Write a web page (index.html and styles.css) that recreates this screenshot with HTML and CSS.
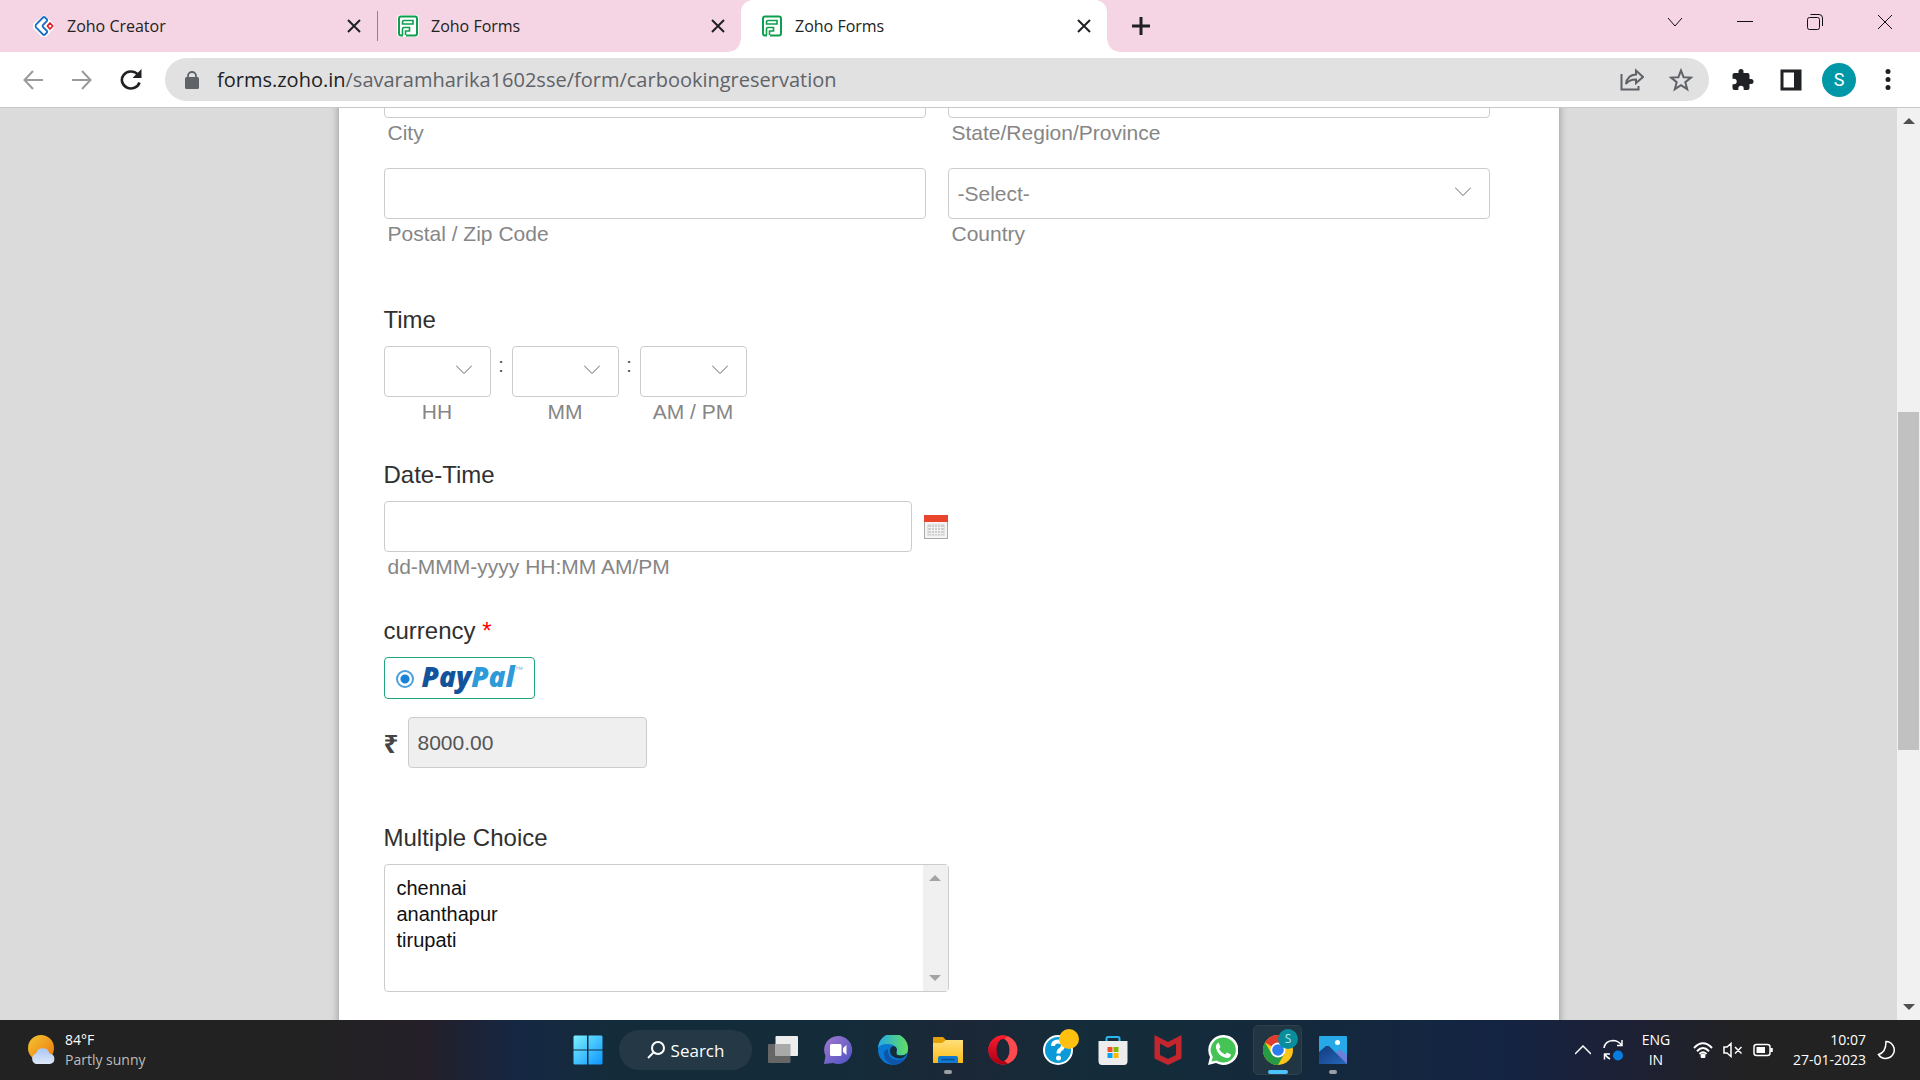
FILE: index.html
```html
<!DOCTYPE html>
<html lang="en">
<head>
<meta charset="utf-8">
<title>Zoho Forms</title>
<link rel="stylesheet" href="styles.css">
</head>
<body>
<div class="screen">
  <header class="tabstrip">
    <div class="tab">
      <svg class="favicon" viewBox="0 0 22 22"><path d="M11 0 21 9v4L13 22H9L0 13V9z" fill="#fff"/><path d="M10 2.500 3 9.500Q2 11 3 12.500L10 19.500Q11 20.500 12 19.500L14 17.500Q14.500 16.500 14 16L10 12Q9 11 10 10L14 6Q14.500 5 14 4.500L12 2.500Q11 1.500 10 2.500z" fill="none" stroke="#1b6fc0" stroke-width="1.800"/><path d="M17 8 19.800 11 17 14 14.400 11z" fill="#fff" stroke="#e2202c" stroke-width="1.800" stroke-linejoin="round"/></svg>
      <span class="tab-title">Zoho Creator</span>
      <button class="tab-close" aria-label="Close tab"><svg viewBox="0 0 14 14"><path d="M1 1 13 13M13 1 1 13"/></svg></button>
    </div>
    <div class="tab divided">
      <svg class="favicon" viewBox="0 0 22 22"><rect width="22" height="22" rx="3" fill="#fff"/><path d="M4 1.500H18Q20 1.500 20 3.500V18.500Q20 20.500 18 20.500H9M6 20.500H4Q2 20.500 2 18.500V3.500Q2 1.500 4 1.500" fill="none" stroke="#0e9f4f" stroke-width="2"/><path d="M7 5.500H16V9H5.500V7Q5.500 5.500 7 5.500zM5.500 20V14Q5.500 12.500 7 12.500H12.500V16H8.500V20" fill="none" stroke="#0e9f4f" stroke-width="1.600"/></svg>
      <span class="tab-title">Zoho Forms</span>
      <button class="tab-close" aria-label="Close tab"><svg viewBox="0 0 14 14"><path d="M1 1 13 13M13 1 1 13"/></svg></button>
    </div>
    <div class="tab active">
      <svg class="favicon" viewBox="0 0 22 22"><path d="M4 1.500H18Q20 1.500 20 3.500V18.500Q20 20.500 18 20.500H9M6 20.500H4Q2 20.500 2 18.500V3.500Q2 1.500 4 1.500" fill="none" stroke="#0e9f4f" stroke-width="2"/><path d="M7 5.500H16V9H5.500V7Q5.500 5.500 7 5.500zM5.500 20V14Q5.500 12.500 7 12.500H12.500V16H8.500V20" fill="none" stroke="#0e9f4f" stroke-width="1.600"/></svg>
      <span class="tab-title">Zoho Forms</span>
      <button class="tab-close" aria-label="Close tab"><svg viewBox="0 0 14 14"><path d="M1 1 13 13M13 1 1 13"/></svg></button>
    </div>
    <button class="new-tab" aria-label="New tab"><svg viewBox="0 0 20 20"><path d="M10 1V19M1 10H19"/></svg></button>
    <div class="window-controls">
      <button aria-label="Search tabs"><svg viewBox="0 0 16 16"><path d="M1 4 8 12 15 4"/></svg></button>
      <button aria-label="Minimize"><svg viewBox="0 0 16 16"><path d="M0 7.500H16"/></svg></button>
      <button aria-label="Restore"><svg viewBox="0 0 16 16"><rect x=".5" y="3.500" width="12" height="12" rx="2"/><path d="M3.500 .5H12Q15.500 .5 15.500 4V12"/></svg></button>
      <button aria-label="Close"><svg viewBox="0 0 16 16"><path d="M1 1 15 15M15 1 1 15"/></svg></button>
    </div>
  </header>

  <nav class="toolbar">
    <button class="nav-btn faded" aria-label="Back"><svg viewBox="0 0 20 20"><path d="M20 10H1.500M10 1 1.500 10 10 19"/></svg></button>
    <button class="nav-btn faded" aria-label="Forward"><svg viewBox="0 0 20 20"><path d="M0 10H18.500M10 1 18.500 10 10 19"/></svg></button>
    <button class="nav-btn" aria-label="Reload"><svg class="reload" viewBox="0 0 22 22"><path d="M17.500 5.200A9 8.500 0 1 0 19.500 13.500" fill="none" stroke="#202124" stroke-width="2.600"/><path d="M21.500 0V9H12.500z" fill="#202124"/></svg></button>
    <div class="omnibox">
      <svg class="lock" viewBox="0 0 14 18"><rect y="6" width="14" height="12" rx="1.500" fill="#5f6368"/><path d="M3 7V5a4 4 0 0 1 8 0V7" fill="none" stroke="#5f6368" stroke-width="1.800"/></svg>
      <a class="url" href="#">forms.zoho.in<span class="path">/savaramharika1602sse/form/carbookingreservation</span></a>
      <button class="box-btn" aria-label="Share"><svg viewBox="0 0 24 22"><path d="M1.500 5V20.500H18.500V17M6 15Q7 6 16 5.500V1.500L23 8 16 14V10.500Q9 10.500 6 15z"/></svg></button>
      <button class="box-btn" aria-label="Bookmark"><svg viewBox="0 0 24 24"><path d="M12 2.500 14.600 9.200 22 9.600 16.300 14.200 18.200 21.200 12 17.200 5.800 21.200 7.700 14.200 2 9.600 9.400 9.200z"/></svg></button>
    </div>
    <button class="tool-btn" aria-label="Extensions"><svg viewBox="0 0 24 24"><path d="M21 11h-1.500V7a2 2 0 0 0-2-2h-4V3.500a2.500 2.500 0 0 0-5 0V5h-4a2 2 0 0 0-2 2v3.800H4a2.700 2.700 0 0 1 0 5.400H2.500V20a2 2 0 0 0 2 2h3.800v-1.500a2.700 2.700 0 0 1 5.400 0V22h3.800a2 2 0 0 0 2-2v-4H21a2.500 2.500 0 0 0 0-5z" fill="#202124"/></svg></button>
    <button class="tool-btn" aria-label="Side panel"><svg viewBox="0 0 24 24"><path d="M1.500 1.500H22.500V22.500H1.500zM4.500 4.500V19.500H15V4.500z" fill="#202124" fill-rule="evenodd"/></svg></button>
    <button class="tool-btn avatar" aria-label="Profile">S</button>
    <button class="tool-btn" aria-label="Menu"><svg viewBox="0 0 24 24"><g fill="#202124"><circle cx="12" cy="3.500" r="2.500"/><circle cx="12" cy="11.500" r="2.500"/><circle cx="12" cy="19.500" r="2.500"/></g></svg></button>
  </nav>

  <div class="viewport">
    <main class="canvas">
      <form class="sheet">
        <div class="address">
          <div class="field">
            <input class="box" id="city" type="text">
            <label class="hint" for="city">City</label>
          </div>
          <div class="field">
            <input class="box" id="state" type="text">
            <label class="hint" for="state">State/Region/Province</label>
          </div>
          <div class="field">
            <input class="box" id="zip" type="text">
            <label class="hint" for="zip">Postal / Zip Code</label>
          </div>
          <div class="field">
            <div class="picker">
              <select class="box" id="country"><option>-Select-</option></select>
              <svg class="chevron" viewBox="0 0 16 10"><path d="M0 .5 8 8.500 16 .5"/></svg>
            </div>
            <label class="hint" for="country">Country</label>
          </div>
        </div>

        <section class="group">
          <h2 class="title">Time</h2>
          <div class="time">
            <div class="part">
              <div class="picker"><select class="box" id="hh"><option></option></select><svg class="chevron" viewBox="0 0 16 10"><path d="M0 .5 8 8.500 16 .5"/></svg></div>
              <label class="hint" for="hh">HH</label>
            </div>
            <span class="colon">:</span>
            <div class="part">
              <div class="picker"><select class="box" id="mm"><option></option></select><svg class="chevron" viewBox="0 0 16 10"><path d="M0 .5 8 8.500 16 .5"/></svg></div>
              <label class="hint" for="mm">MM</label>
            </div>
            <span class="colon">:</span>
            <div class="part">
              <div class="picker"><select class="box" id="ampm"><option></option></select><svg class="chevron" viewBox="0 0 16 10"><path d="M0 .5 8 8.500 16 .5"/></svg></div>
              <label class="hint" for="ampm">AM / PM</label>
            </div>
          </div>
        </section>

        <section class="group">
          <h2 class="title">Date-Time</h2>
          <div class="date">
            <input class="box" id="date" type="text">
            <button type="button" class="calendar" aria-label="Pick a date"><svg viewBox="0 0 24 24"><rect x=".5" y="1" width="23" height="22.500" fill="#f4f4f4" stroke="#a9a9a9"/><path d="M0 0H24V7H0z" fill="#e8452c"/><path d="M3.500 9.500H20.500V20.500H3.500z" fill="#cfcfcf"/><path d="M4 12.500H20M4 15.500H20M4 18.500H20M7.500 10V20M10.500 10V20M13.500 10V20M16.500 10V20" stroke="#f0f0f0"/></svg></button>
          </div>
          <label class="hint" for="date">dd-MMM-yyyy HH:MM AM/PM</label>
        </section>

        <section class="group payment">
          <h2 class="title">currency <span class="required">*</span></h2>
          <label class="paypal">
            <input type="radio" name="gateway" checked>
            <span class="brand"><span class="pay">Pay</span><span class="pal">Pal</span></span><span class="tm">™</span>
          </label>
          <div class="amount">
            <label class="rupee" for="amount">₹</label>
            <input class="box filled" id="amount" type="text" value="8000.00" readonly>
          </div>
        </section>

        <section class="group choice">
          <label class="title" for="cities">Multiple Choice</label>
          <div class="listbox">
            <select id="cities" multiple size="4">
              <option>chennai</option>
              <option>ananthapur</option>
              <option>tirupati</option>
            </select>
            <div class="list-scroll"><i class="arrow up"></i><i class="arrow down"></i></div>
          </div>
        </section>
      </form>
    </main>
    <div class="page-scroll">
      <i class="arrow up"></i>
      <div class="track"><div class="thumb"></div></div>
      <i class="arrow down"></i>
    </div>
  </div>

  <footer class="taskbar">
    <div class="weather">
      <svg viewBox="0 0 28 30"><defs><linearGradient id="sun" x1="0" y1="0" x2="1" y2="1"><stop offset="0" stop-color="#f2c531"/><stop offset="1" stop-color="#f0760c"/></linearGradient><linearGradient id="cloud" x1="0" y1="0" x2="0" y2="1"><stop offset="0" stop-color="#a9c7f5"/><stop offset="1" stop-color="#dfe8f8"/></linearGradient></defs><circle cx="13" cy="13" r="13" fill="url(#sun)"/><path d="M8 29a5.500 5.500 0 0 1 0-10.500 7 7 0 0 1 13.500 0A5.300 5.300 0 0 1 22 29z" fill="url(#cloud)"/></svg>
      <div class="stack"><span>84°F</span><span class="dim">Partly sunny</span></div>
    </div>

    <div class="apps">
      <button class="app" aria-label="Start"><svg viewBox="0 0 30 30"><defs><linearGradient id="win" gradientUnits="userSpaceOnUse" x1="0" y1="0" x2="30" y2="30"><stop offset="0" stop-color="#7ef3ff"/><stop offset="1" stop-color="#0a93ff"/></linearGradient></defs><path d="M1.500 .5H14V14.500H.5V1.500zM15.500 .5H28.500L29.500 1.500V14.500H15.500zM.5 15.500H14V29.500H1.500L.5 28.500zM15.500 15.500H29.500V28.500L28.500 29.500H15.500z" fill="url(#win)"/></svg></button>
      <button class="search"><svg viewBox="0 0 18 18"><circle cx="11" cy="7" r="6"/><path d="M6.500 11.500 1 17"/></svg>Search</button>
      <button class="app" aria-label="Task view"><svg viewBox="0 0 30 30"><rect x="0" y="9" width="22.500" height="19" rx="1" fill="#666"/><rect x="7.500" y="1" width="22.500" height="20" rx="1" fill="#ededed"/><path d="M7.500 9H22.500V21H7.500z" fill="#a9a9a9"/></svg></button>
      <button class="app" aria-label="Chat"><svg viewBox="0 0 30 30"><defs><linearGradient id="chat" x1="0" y1="0" x2="1" y2="1"><stop offset="0" stop-color="#a379d0"/><stop offset="1" stop-color="#4b52c4"/></linearGradient></defs><path d="M15 1a14 14 0 1 1-5 27L1 29 2.500 21A14 14 0 0 1 15 1z" fill="url(#chat)"/><rect x="7" y="9" width="11.500" height="12" rx="1.500" fill="#fff"/><path d="M20 13 23.500 10V20L20 17z" fill="#fff"/></svg></button>
      <button class="app" aria-label="Edge"><svg viewBox="0 0 30 30"><defs><linearGradient id="edge" x1="0" y1="0" x2="1" y2="0"><stop offset="0" stop-color="#22a8e8"/><stop offset="1" stop-color="#63df60"/></linearGradient></defs><circle cx="15" cy="15" r="15" fill="#0a77d2"/><path d="M0 13A15 15 0 0 1 30 14Q30 20 23 20.500 17.500 20.500 18.500 17 20 10 11 9 3 8.500 0 13z" fill="url(#edge)"/><path d="M10 14Q9 24 19 25 24 25.500 27.500 23A15 15 0 0 1 15 30Q6 27 6 19 6 15 10 14z" fill="#0d55a8"/><path d="M15.500 11Q20 12 18.500 17 17.500 20.500 23 20.500 27 20.500 29 18 27 23.500 21 23.500 12 22.500 12 16 12 12 15.500 11z" fill="#142c3b"/></svg></button>
      <button class="app running" aria-label="File Explorer"><svg viewBox="0 0 30 30"><defs><linearGradient id="fold" x1="0" y1="0" x2="0" y2="1"><stop offset="0" stop-color="#ffe07a"/><stop offset="1" stop-color="#fcbb15"/></linearGradient></defs><path d="M0 3Q0 2 1 2H10L13 5H29Q30 5 30 6V10H0z" fill="#e3a008"/><path d="M0 8H9L13 5H30V28H0z" fill="url(#fold)"/><path d="M5 28V23Q5 21 7 21H23Q25 21 25 23V28z" fill="#1179cf"/><path d="M8.500 24.500H21.500" stroke="#074f91" stroke-width="1.500"/></svg></button>
      <button class="app" aria-label="Opera"><svg viewBox="0 0 30 30"><defs><linearGradient id="opera" x1="0" y1="0" x2="0" y2="1"><stop offset="0" stop-color="#ff1b2d"/><stop offset="1" stop-color="#a70014"/></linearGradient></defs><circle cx="15" cy="15" r="14.500" fill="#ff4a4d"/><path d="M20 1.500A14.500 14.500 0 1 0 20 28.500Q15 28 15 15 15 2 20 1.500z" fill="url(#opera)"/><ellipse cx="15" cy="15" rx="6.500" ry="11" fill="#192938"/></svg></button>
      <button class="app" aria-label="Help"><svg viewBox="0 0 30 30"><circle cx="15" cy="15" r="15" fill="#fff"/><circle cx="15" cy="15" r="13" fill="#0a9ad8"/><path d="M10 11Q10 6.500 15 6.500 20 6.500 20 10.500 20 13 17.500 14.500 15.500 15.500 15.500 18.500" fill="none" stroke="#fff" stroke-width="4"/><circle cx="15.500" cy="23" r="2.500" fill="#fff"/></svg><i class="badge"></i></button>
      <button class="app" aria-label="Store"><svg viewBox="0 0 30 30"><path d="M8.500 7V3.500Q8.500 2 10 2H20Q21.500 2 21.500 3.500V7" fill="none" stroke="#2bb6f0" stroke-width="2"/><path d="M.5 6H29.500V26Q29.500 30 26 30H4Q.5 30 .5 26z" fill="#ededed"/><path d="M9.500 12H14.500V17H9.500z" fill="#f25022"/><path d="M15.500 12H20.500V17H15.500z" fill="#7fba00"/><path d="M9.500 18H14.500V23H9.500z" fill="#00a4ef"/><path d="M15.500 18H20.500V23H15.500z" fill="#ffb900"/></svg></button>
      <button class="app" aria-label="McAfee"><svg viewBox="0 0 30 30"><path d="M1.500 0 15 7 28.500 0V23.500L15 30 1.500 23.500zM7 8.500V20L15 24 23 20V8.500L15 13z" fill="#c4262e" fill-rule="evenodd"/></svg></button>
      <button class="app" aria-label="WhatsApp"><svg viewBox="0 0 30 30"><path d="M15 0a15 15 0 1 1-7 28L0 30 2 22A15 15 0 0 1 15 0z" fill="#fff"/><path d="M15 2.500a12.500 12.500 0 1 1-6.500 23L3.500 26.500 4.800 22A12.500 12.500 0 0 1 15 2.500z" fill="#45c455"/><path d="M10.500 7.500 12.500 12 11 14Q13 18 17 19.500L19 17.500 23 19.500Q22.500 23 19 23 10 21.500 8 13 7.500 9 10.500 7.500z" fill="#fff"/></svg></button>
      <button class="app current" aria-label="Chrome"><svg viewBox="0 0 30 30"><circle cx="15" cy="15" r="15" fill="#ffc61a"/><path d="M15 15 28 7.500A15 15 0 0 0 2 7.500z" fill="#e33b2e"/><path d="M2 7.500A15 15 0 0 0 15 30L21.500 18.500 15 15 8.500 18.500z" fill="#259b45"/><circle cx="15" cy="15" r="7.500" fill="#fff"/><circle cx="15" cy="15" r="5.800" fill="#2c7ef0"/></svg><i class="badge user">S</i></button>
      <button class="app running" aria-label="Photos"><svg viewBox="0 0 30 30"><defs><linearGradient id="hill" x1="0" y1="0" x2="1" y2="1"><stop offset="0" stop-color="#143a7c"/><stop offset="1" stop-color="#2469bd"/></linearGradient></defs><rect x="1" y="1" width="28" height="28" rx="1" fill="#27a9e8"/><path d="M1 17 9 11 17 19 22 14 29 20V29H1z" fill="#6c80d8"/><path d="M1 17 8 11 11 11 29 29H1z" fill="url(#hill)"/><circle cx="19.500" cy="7.500" r="2.500" fill="#fff"/></svg></button>
    </div>

    <div class="tray">
      <svg class="caret" viewBox="0 0 16 10"><path d="M0 9 8 1 16 9"/></svg>
      <svg class="sync" viewBox="0 0 20 22"><path d="M1 9Q2 2 10 1.500 15 1.500 18.500 6M19 1V6.500H14M7 20Q4 18.500 2 15.500M1.500 20.500V15H7"/><circle cx="15" cy="16.500" r="5" fill="#0a7ce0" stroke="none"/></svg>
      <div class="stack lang"><span>ENG</span><span>IN</span></div>
      <svg class="wifi" viewBox="0 0 20 16"><path d="M1 6Q10-3.500 19 6M4 9.200Q10 3 16 9.200M6.500 12Q10 8.500 13.500 12"/><circle cx="10" cy="14" r="1.500" fill="#fff"/></svg>
      <svg class="mute" viewBox="0 0 20 16"><path d="M1 5H4L8 1.500V14.500L4 11H1zM12 5 18.500 11.500M18.500 5 12 11.500"/></svg>
      <svg class="battery" viewBox="0 0 20 14"><rect x="1" y="1.500" width="16" height="11" rx="2.500"/><path d="M3.500 4H12V10H3.500z" fill="#fff" stroke="none"/><path d="M18.500 5V9" stroke-width="2.500"/></svg>
      <div class="stack clock"><span>10:07</span><span>27-01-2023</span></div>
      <svg class="moon" viewBox="0 0 18 20"><path d="M9 1.500A8.500 8.500 0 1 1 1.500 14.500Q9 12.500 9 1.500z"/></svg>
    </div>
  </footer>
</div>
</body>
</html>
```
FILE: styles.css
```css
* { box-sizing: border-box; }

body {
  margin: 0;
  font-family: "Liberation Sans", Arial, sans-serif;
  color: #222;
}

button {
  border: 0;
  padding: 0;
  background: none;
  font: inherit;
  color: inherit;
}

svg { display: block; flex: none; }

.screen {
  display: flex;
  flex-direction: column;
  height: 100vh;
}

/* Browser tabs */
.tabstrip {
  display: flex;
  align-items: center;
  height: 52px;
  padding-left: 13px;
  background: #f5d5e3;
  font-family: "Open Sans", "Noto Sans", sans-serif;
  font-size: 16px;
}

.tab {
  position: relative;
  display: flex;
  align-items: center;
  flex: 0 1 364px;
  height: 52px;
  padding: 0 12px 0 20px;
}

.divided::before {
  content: "";
  position: absolute;
  left: 0;
  height: 30px;
  border-left: 1px solid #967f8a;
}

.tab.active {
  flex-basis: 366px;
  background: #fff;
  border-radius: 12px 12px 0 0;
}

.tab.active::before,
.tab.active::after {
  content: "";
  position: absolute;
  bottom: 0;
  width: 12px;
  height: 12px;
}

.tab.active::before {
  right: 100%;
  background: radial-gradient(circle at 0 0, #f5d5e3 11px, #fff 12px);
}

.tab.active::after {
  left: 100%;
  background: radial-gradient(circle at 100% 0, #f5d5e3 11px, #fff 12px);
}

.favicon { width: 22px; height: 22px; }
.tab-title { flex: 1; margin-left: 12px; }
.tab-close { padding: 4px; }

.tab-close svg {
  width: 14px;
  height: 14px;
  stroke: #202124;
  stroke-width: 2;
}

.new-tab { margin-left: 24px; }

.new-tab svg {
  width: 20px;
  height: 20px;
  stroke: #202124;
  stroke-width: 3;
}

.window-controls {
  display: flex;
  margin: 0 0 8px auto;
}

.window-controls button {
  display: grid;
  place-items: center;
  width: 70px;
  height: 44px;
}

.window-controls svg {
  width: 16px;
  height: 16px;
  fill: none;
  stroke: #111;
}

/* Address bar */
.toolbar {
  display: flex;
  align-items: center;
  height: 56px;
  padding: 0 8px;
  border-bottom: 1px solid #c8c8c8;
  background: #fff;
}

.nav-btn {
  display: grid;
  place-items: center;
  width: 49px;
  height: 44px;
}

.nav-btn svg { width: 20px; height: 20px; }
.nav-btn .reload { width: 22px; height: 22px; }

.faded svg {
  fill: none;
  stroke: #9a9a9a;
  stroke-width: 2;
}

.omnibox {
  display: flex;
  align-items: center;
  flex: 1;
  height: 43px;
  margin: 0 8px 0 10px;
  padding: 0 16px 0 20px;
  border-radius: 22px;
  background: #e1e1e1;
}

.lock { width: 14px; height: 18px; }

.url {
  flex: 1;
  margin-left: 18px;
  font-family: "Open Sans", "Noto Sans", sans-serif;
  font-size: 20px;
  color: #202124;
  text-decoration: none;
}

.path { color: #5f6368; }
.box-btn { margin-left: 25px; }

.box-btn svg {
  width: 24px;
  height: 24px;
  fill: none;
  stroke: #5f6368;
  stroke-width: 2;
}

.tool-btn {
  display: grid;
  place-items: center;
  width: 49px;
  height: 44px;
}

.tool-btn svg { width: 24px; height: 24px; }

.avatar {
  width: 34px;
  height: 34px;
  margin: 0 7px;
  border-radius: 50%;
  background: #0097a7;
  color: #fff;
  font-family: Roboto, sans-serif;
  font-size: 18px;
}

/* Page area */
.viewport {
  display: flex;
  flex: 1;
  min-height: 0;
}

.canvas {
  display: flex;
  justify-content: center;
  align-items: flex-start;
  flex: 1;
  overflow: hidden;
  background: #dbdbdb;
}

.sheet {
  width: 1220px;
  max-width: 100%;
  min-height: 120%;
  margin-top: -41px;
  padding: 0 69px 0 45px;
  background: #fff;
  box-shadow: 0 0 8px rgba(0, 0, 0, 0.35);
}

.address {
  display: grid;
  grid-template-columns: 1fr 1fr;
  column-gap: 22px;
  row-gap: 20px;
}

.box {
  display: block;
  width: 100%;
  height: 51px;
  padding: 0 9px;
  border: 1px solid #ccc;
  border-radius: 4px;
  background: #fff;
  font-family: inherit;
  font-size: 21px;
  color: #888;
  appearance: none;
}

.hint {
  display: block;
  padding: 0 4px;
  font-size: 21px;
  line-height: 30px;
  color: #868686;
}

.title {
  display: block;
  margin: 0 0 10px;
  font-size: 24px;
  font-weight: 400;
  line-height: 32px;
  color: #303030;
}

.group { margin-top: 32px; }
.address + .group { margin-top: 55px; }
.group.payment { margin-top: 33px; }

.picker { position: relative; }

.chevron {
  position: absolute;
  top: 19px;
  right: 19px;
  width: 16px;
  height: 10px;
  fill: none;
  stroke: #666;
}

.time { display: flex; }
.part { width: 107px; text-align: center; }

.colon {
  width: 21px;
  font-size: 20px;
  line-height: 38px;
  text-align: center;
  color: #555;
}

.date {
  display: flex;
  align-items: center;
  gap: 12px;
}

.date .box { width: 528px; }
.calendar svg { width: 24px; height: 24px; }

.required { color: #f00; }

.paypal {
  display: flex;
  align-items: center;
  width: 151px;
  height: 42px;
  padding-left: 11px;
  border: 1px solid #1fa67e;
  border-radius: 4px;
}

.paypal input {
  width: 18px;
  height: 18px;
  margin: 2px 8px 0 0;
  border: 2px solid #4a9fdc;
  border-radius: 50%;
  background: radial-gradient(circle, #1683d8 4px, #fff 5px);
  appearance: none;
}

.brand {
  font-family: "Open Sans", "Noto Sans", sans-serif;
  font-size: 28px;
  font-style: italic;
  font-weight: 800;
  line-height: 32px;
  margin-bottom: 4px;
}

.pay { color: #12539b; }
.pal { color: #2f9ad8; }

.tm {
  align-self: flex-start;
  font-size: 8px;
  line-height: 24px;
  color: #7db8e0;
}

.amount {
  display: flex;
  align-items: center;
  margin-top: 18px;
}

.rupee {
  width: 24px;
  font-family: "Noto Sans", "DejaVu Sans", sans-serif;
  font-size: 26px;
  font-weight: 700;
  line-height: 32px;
  color: #444;
}

.filled {
  width: 239px;
  background: #efefef;
  color: #555;
}

.choice { margin-top: 54px; }

.listbox {
  display: flex;
  width: 565px;
  height: 128px;
  border: 1px solid #ccc;
  border-radius: 4px;
}

.listbox select {
  flex: 1;
  margin: 0;
  padding: 12px 10px;
  border: 0;
  background: none;
  font-family: inherit;
  font-size: 20px;
  overflow: hidden;
  appearance: none;
}

.listbox option {
  min-height: 26px;
  line-height: 26px;
  padding: 0 2px;
  color: #111;
}

.list-scroll {
  display: flex;
  flex-direction: column;
  align-items: center;
  justify-content: space-between;
  width: 25px;
  padding: 10px 0;
  background: #f0f0f0;
}

.arrow {
  border: 6px solid transparent;
}

.arrow.up { border-top: 0; border-bottom-color: #a3a3a3; }
.arrow.down { border-bottom: 0; border-top-color: #a3a3a3; }

.page-scroll {
  display: flex;
  flex-direction: column;
  align-items: center;
  width: 23px;
  padding: 10px 0;
  background: #f1f1f1;
}

.page-scroll .up { border-bottom-color: #505050; }
.page-scroll .down { border-top-color: #505050; }

.track {
  flex: 1;
  width: 21px;
  padding: 288px 0 254px;
}

.thumb {
  height: 100%;
  background: #c1c1c1;
}

/* Desktop taskbar */
.taskbar {
  display: grid;
  grid-template-columns: 1fr auto 1fr;
  align-items: center;
  height: 60px;
  background: linear-gradient(90deg, #222 16%, #241f28 22%, #152743 27%, #142c3a 32%, #142c3a 44%, #1b2736 50%, #142c3a 57%, #142a3b 66%, #142443 78%, #1d2034 85%, #222 91%);
  color: #fff;
  font-family: "Open Sans", "Noto Sans", sans-serif;
  font-size: 14px;
}

.stack {
  display: flex;
  flex-direction: column;
  line-height: 20px;
}

.dim { color: #bdbdbd; }

.weather {
  display: flex;
  align-items: center;
  gap: 9px;
  padding-left: 28px;
}

.weather svg { width: 28px; height: 30px; }

.apps { display: flex; align-items: center; }

.app {
  position: relative;
  display: grid;
  place-items: center;
  width: 55px;
  height: 60px;
}

.app svg { width: 30px; height: 30px; }

.search {
  display: flex;
  align-items: center;
  justify-content: center;
  gap: 6px;
  width: 133px;
  height: 40px;
  margin: 0 3px 0 4px;
  border-radius: 20px;
  background: #243845;
  font-size: 17px;
}

.search svg {
  width: 18px;
  height: 18px;
  fill: none;
  stroke: #fff;
  stroke-width: 2;
}

.running::after,
.current::after {
  content: "";
  position: absolute;
  bottom: 6px;
  width: 8px;
  height: 4px;
  border-radius: 2px;
  background: #9a9fa5;
}

.current {
  width: 49px;
  height: 50px;
  margin: 0 3px;
  border: 1px solid #2d404c;
  border-radius: 5px;
  background: #223542;
}

.current::after {
  bottom: 0;
  width: 20px;
  background: #4cc2ff;
}

.badge {
  position: absolute;
  top: 9px;
  right: 6px;
  width: 20px;
  height: 20px;
  border-radius: 50%;
  background: #ffc010;
}

.badge.user {
  top: 3px;
  right: 3px;
  background: #078d9c;
  font-size: 12px;
  font-style: normal;
  line-height: 20px;
  color: #b8e4e8;
}

.tray {
  display: flex;
  align-items: center;
  justify-content: flex-end;
  padding-right: 25px;
}

.tray svg {
  width: 20px;
  fill: none;
  stroke: #fff;
  stroke-width: 2;
}

.tray .caret { width: 16px; height: 10px; }
.tray .sync { height: 22px; margin-left: 12px; }
.lang { align-items: center; margin-left: 18px; width: 30px; }
.tray .wifi { height: 16px; margin-left: 22px; }
.tray .mute { height: 16px; margin-left: 10px; }
.tray .battery { height: 14px; margin-left: 10px; }
.clock { align-items: flex-end; margin-left: 20px; }
.tray .moon { width: 18px; height: 20px; margin-left: 11px; }

.tray .caret,
.tray .sync,
.tray .mute,
.tray .battery,
.tray .moon { stroke-width: 1.5; }
```
